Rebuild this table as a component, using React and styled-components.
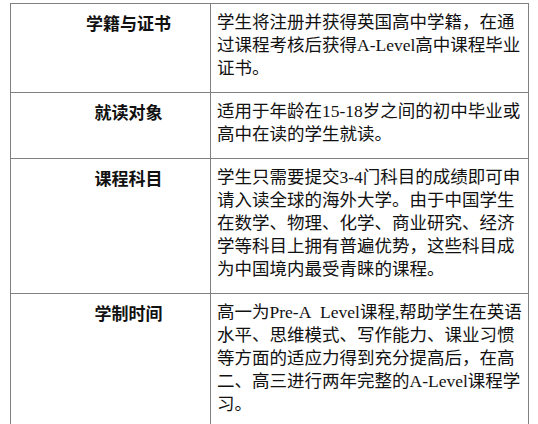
import React from "react";
import styled, { createGlobalStyle } from "styled-components";

const Global = createGlobalStyle`
  html, body { margin: 0; padding: 0; background: #fff; }
  body { font-family: "Liberation Serif", "Noto Sans CJK SC", serif; color: #111; }
`;

const Page = styled.div`
  padding: 3px 0 0 10px;
`;

const Table = styled.table`
  width: 519px;
  border-collapse: collapse;
  table-layout: fixed;
`;

const Row = styled.tr``;

const Label = styled.th`
  width: 200px;
  box-sizing: border-box;
  border: 1px solid #808080;
  vertical-align: top;
  text-align: center;
  padding: 7px 6px 12px 42px;
  font-family: "Noto Sans CJK SC", sans-serif;
  font-weight: 700;
  font-size: 17px;
  line-height: 23px;
  color: #111;
`;

const Cell = styled.td`
  border: 1px solid #808080;
  vertical-align: top;
  text-align: left;
  padding: 7px 2px 12px 6px;
  font-family: "Liberation Serif", "Noto Sans CJK SC", serif;
  font-size: 17.5px;
  line-height: 23px;
  color: #111;
`;

const rows = [
  ["学籍与证书", "学生将注册并获得英国高中学籍，在通过课程考核后获得A-Level高中课程毕业证书。"],
  ["就读对象", "适用于年龄在15-18岁之间的初中毕业或高中在读的学生就读。"],
  ["课程科目", "学生只需要提交3-4门科目的成绩即可申请入读全球的海外大学。由于中国学生在数学、物理、化学、商业研究、经济学等科目上拥有普遍优势，这些科目成为中国境内最受青睐的课程。"],
  ["学制时间", "高一为Pre-A\u00a0 Level课程,帮助学生在英语水平、思维模式、写作能力、课业习惯等方面的适应力得到充分提高后，在高二、高三进行两年完整的A-Level课程学习。"],
];

export default function App() {
  return (
    <>
      <Global />
      <Page>
        <Table>
          <tbody>
            {rows.map(([k, v]) => (
              <Row key={k}>
                <Label>{k}</Label>
                <Cell>{v}</Cell>
              </Row>
            ))}
          </tbody>
        </Table>
      </Page>
    </>
  );
}
